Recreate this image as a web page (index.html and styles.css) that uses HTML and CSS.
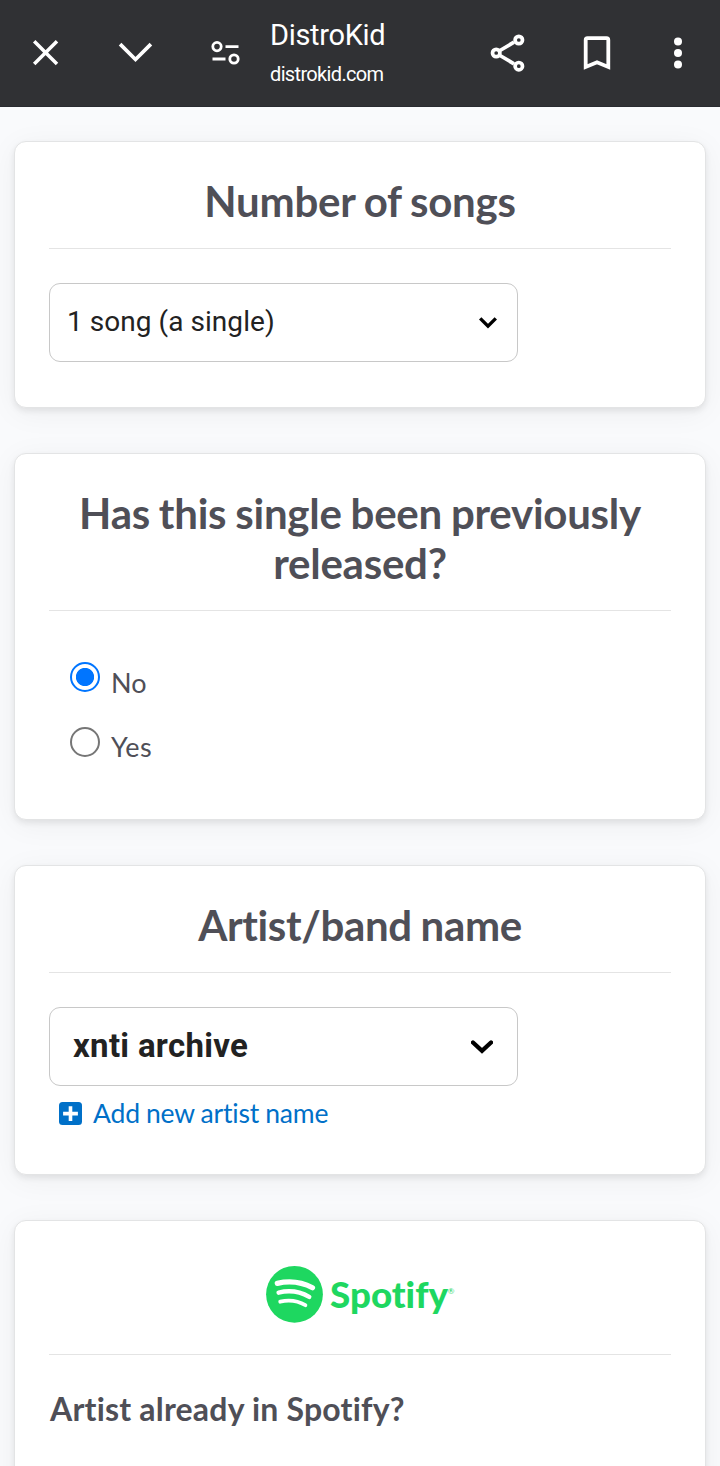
FILE: index.html
```html
<!DOCTYPE html>
<html lang="en">
<head>
<meta charset="utf-8">
<title>DistroKid</title>
<link rel="stylesheet" href="styles.css">
</head>
<body>
<header class="topbar">
  <svg class="icon close" viewBox="0 0 36 36"><path d="M6.200 6.200 29 29M29 6.200 6.200 29"/></svg>
  <svg class="icon collapse" viewBox="0 0 36 36"><path d="M2.100 9.100 17.500 24.500 32.900 9.100"/></svg>
  <svg class="icon tune" viewBox="0 0 36 36"><circle cx="9" cy="11.600" r="4.200"/><path d="M17.500 11.600h13M4.500 24H17.500"/><circle cx="26" cy="24" r="4.200"/></svg>
  <div class="site">
    <div class="site-name">DistroKid</div>
    <div class="site-url">distrokid.com</div>
  </div>
  <svg class="icon share" viewBox="0 0 40 40"><path d="M12 17.500 26 9.200M12 22.500 26 30.800"/><circle cx="8.200" cy="20" r="3.700"/><circle cx="30.800" cy="7" r="3.700"/><circle cx="30.800" cy="33.200" r="3.700"/></svg>
  <svg class="icon bookmark" viewBox="0 0 36 36"><path d="M6.700 32V5Q6.700 3.200 8.500 3.200H27.500Q29.300 3.200 29.300 5V32L18 27.300Z"/></svg>
  <svg class="dots" viewBox="0 0 12 36"><circle cx="6" cy="6.600" r="4"/><circle cx="6" cy="18" r="4"/><circle cx="6" cy="29.400" r="4"/></svg>
</header>
<main class="page">
  <section class="card songs">
    <h2 class="title">Number of songs</h2>
    <div class="select">
      <span class="value">1 song (a single)</span>
      <svg class="chevron" viewBox="0 0 18 12"><path d="M1.200 1.400 9 9.100 16.800 1.400"/></svg>
    </div>
  </section>
  <section class="card released">
    <h2 class="title">Has this single been previously<br>released?</h2>
    <div class="options">
      <label class="option"><span class="radio checked"></span><span class="label no">No</span></label>
      <label class="option"><span class="radio"></span><span class="label yes">Yes</span></label>
    </div>
  </section>
  <section class="card artist">
    <h2 class="title">Artist/band name</h2>
    <div class="select bold">
      <span class="value">xnti archive</span>
      <svg class="chevron" viewBox="0 0 22 14"><path d="M2 2.500 11 10.900 20 2.500"/></svg>
    </div>
    <a class="add">
      <svg class="plus" viewBox="0 0 23 23"><rect width="23" height="23" rx="3.500"/><path d="M11.500 4.200v14.800M4.100 11.600h14.800"/></svg>
      <span class="add-text">Add new artist name</span>
    </a>
  </section>
  <section class="card spotify">
    <div class="brand">
      <svg class="logo" viewBox="0 0 190 58">
        <circle cx="28.500" cy="28.300" r="28.400"/>
        <path class="wave w1" d="M11.300 17.400C24 14.500 36 16.200 46.500 21.800"/>
        <path class="wave w2" d="M12.600 26.600C23.600 24 34 25.500 43.200 30.900"/>
        <path class="wave w3" d="M14.200 35.700C23.500 33.600 32 34.900 39.400 39.200"/>
        <text class="wordmark" x="64" y="42" textLength="118" lengthAdjust="spacingAndGlyphs">Spotify</text>
        <text class="reg" x="181.800" y="27.500">®</text>
      </svg>
    </div>
    <h3 class="question">Artist already in Spotify?</h3>
  </section>
</main>
</body>
</html>
```
FILE: styles.css
```css
* { box-sizing: border-box; }
body { margin: 0; height: 1466px; overflow: hidden; background: #f9fafc; font-family: Lato, sans-serif; color: #4f4f57; font-variant-ligatures: none; }
svg { display: block; flex: none; }
.topbar { position: relative; z-index: 1; display: flex; align-items: center; height: 107px; padding-left: 28px; background: #303134; border-bottom: 1px solid #292b30; color: #fff; }
.icon { width: 36px; height: 36px; margin-top: -1px; fill: none; stroke: #fff; stroke-width: 3.5; }
.collapse { margin-left: 54px; stroke-width: 3.7; }
.tune { margin-left: 54px; stroke-width: 2.8; }
.site { width: 218px; margin-left: 26px; padding-bottom: 1px; font-family: Roboto, sans-serif; white-space: nowrap; }
.site-name { height: 41px; line-height: 42px; font-size: 29px; letter-spacing: -.33px; }
.site-url { height: 36px; line-height: 38px; font-size: 20px; letter-spacing: -.65px; }
.share { width: 40px; height: 40px; stroke-width: 3.7; }
.bookmark { margin-left: 50.500px; stroke-width: 3.8; }
.dots { width: 12px; height: 36px; margin: -1px 0 0 57px; fill: #fff; }
.page { display: flex; flex-direction: column; gap: 45px; padding: 34px 14px 0; }
.card { flex: none; padding: 34px 34px 0; background: #fff; border: 1px solid #e3e4e5; border-radius: 12px; box-shadow: 0 3px 6px rgba(0,0,0,.08), 0 5px 30px rgba(0,0,0,.05); }
.songs { height: 267px; }
.released { height: 367px; }
.artist { height: 310px; }
.spotify { height: 300px; }
.title { margin: 0 0 34px; padding-bottom: 22px; border-bottom: 1px solid #e4e4e4; text-align: center; font-size: 42px; line-height: 50px; font-weight: 700; letter-spacing: -.25px; word-spacing: -1px; white-space: nowrap; }
.select { display: flex; align-items: center; justify-content: space-between; width: 469px; height: 79px; padding: 0 20px 3px 17px; border: 1px solid #c8c8c8; border-radius: 11px; color: #222; font-family: Roboto, sans-serif; font-size: 28px; letter-spacing: .05px; }
.artist .title { letter-spacing: -.35px; }
.chevron { width: 18px; height: 12px; margin-top: 3px; fill: none; stroke: #000; stroke-width: 3.4; }
.bold { padding: 0 24px 3px 23px; font-size: 33px; font-weight: 700; letter-spacing: .3px; }
.bold .chevron { width: 22px; height: 14px; stroke-width: 4.300; stroke-linecap: round; }
.options { display: flex; flex-direction: column; gap: 35px; padding: 17px 0 0 21px; }
.option { display: flex; height: 30px; gap: 11px; }
.radio { width: 30px; height: 30px; border: 2px solid #767676; border-radius: 50%; }
.checked { border-color: #0075ff; background: radial-gradient(circle, #0075ff 8.700px, #fff 9.500px); }
.label { font-size: 27px; line-height: 41px; height: 30px; }
.label.yes { line-height: 40px; letter-spacing: .4px; }
.add { display: flex; align-items: center; gap: 11px; height: 34px; margin: 10px 0 0 10px; color: #0070c8; font-size: 26.500px; letter-spacing: -.15px; word-spacing: -.6px; }
.add-text { margin-top: -1px; }
.plus { width: 23px; height: 23px; fill: #0070c8; stroke: none; }
.plus path { stroke: #fff; stroke-width: 3.6; }
.brand { height: 100px; padding: 11px 0 0 217px; border-bottom: 1px solid #e4e4e4; }
.logo { width: 190px; height: 58px; fill: #1ed760; overflow: visible; }
.wave { fill: none; stroke: #fff; stroke-linecap: round; }
.w1 { stroke-width: 5.2; }
.w2 { stroke-width: 4.5; }
.w3 { stroke-width: 3.8; }
.wordmark { font: 900 36.500px Lato, sans-serif; font-variant-ligatures: none; }
.reg { font: 8px Lato, sans-serif; }
.question { margin: 34px 0 0 1px; font-size: 32px; line-height: 40px; font-weight: 700; letter-spacing: .2px; white-space: nowrap; }
```
